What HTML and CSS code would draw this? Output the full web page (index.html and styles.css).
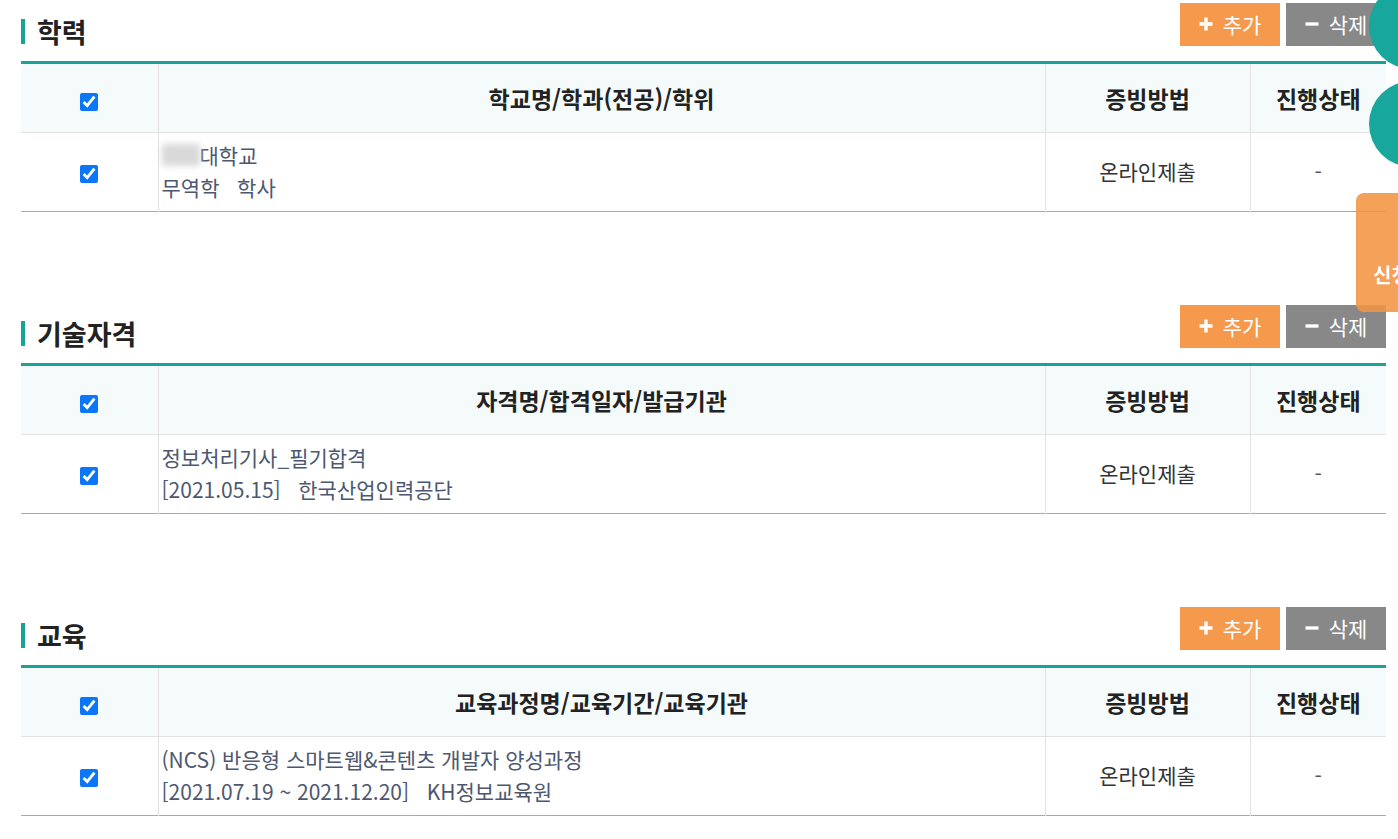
FILE: index.html
```html
<!DOCTYPE html>
<html lang="ko">
<head>
<meta charset="utf-8">
<title>이력 정보</title>
<link rel="stylesheet" href="styles.css">
</head>
<body>
<div class="page">
  <section class="block">
    <div class="block-head">
      <h2 class="block-title">학력</h2>
      <div class="actions">
        <button class="btn btn-add" type="button"><svg class="ico" viewBox="0 0 14 14"><path d="M7 0.5v13M0.5 7h13"/></svg>추가</button>
        <button class="btn btn-del" type="button"><svg class="ico" viewBox="0 0 14 14"><path d="M0.5 7h13"/></svg>삭제</button>
      </div>
    </div>
    <table class="grid">
      <colgroup><col class="c-chk"><col class="c-main"><col class="c-proof"><col class="c-state"></colgroup>
      <thead>
        <tr><th><input type="checkbox" checked></th><th>학교명/학과(전공)/학위</th><th>증빙방법</th><th>진행상태</th></tr>
      </thead>
      <tbody>
        <tr>
          <td class="chk"><input type="checkbox" checked></td>
          <td class="info"><span class="blur" aria-hidden="true"></span>대학교<br>무역학&nbsp;&nbsp;&nbsp;학사</td>
          <td class="center">온라인제출</td>
          <td class="center dash">-</td>
        </tr>
      </tbody>
    </table>
  </section>

  <section class="block">
    <div class="block-head">
      <h2 class="block-title">기술자격</h2>
      <div class="actions">
        <button class="btn btn-add" type="button"><svg class="ico" viewBox="0 0 14 14"><path d="M7 0.5v13M0.5 7h13"/></svg>추가</button>
        <button class="btn btn-del" type="button"><svg class="ico" viewBox="0 0 14 14"><path d="M0.5 7h13"/></svg>삭제</button>
      </div>
    </div>
    <table class="grid">
      <colgroup><col class="c-chk"><col class="c-main"><col class="c-proof"><col class="c-state"></colgroup>
      <thead>
        <tr><th><input type="checkbox" checked></th><th>자격명/합격일자/발급기관</th><th>증빙방법</th><th>진행상태</th></tr>
      </thead>
      <tbody>
        <tr>
          <td class="chk"><input type="checkbox" checked></td>
          <td class="info">정보처리기사_필기합격<br>[2021.05.15]&nbsp;&nbsp;&nbsp;한국산업인력공단</td>
          <td class="center">온라인제출</td>
          <td class="center dash">-</td>
        </tr>
      </tbody>
    </table>
  </section>

  <section class="block">
    <div class="block-head">
      <h2 class="block-title">교육</h2>
      <div class="actions">
        <button class="btn btn-add" type="button"><svg class="ico" viewBox="0 0 14 14"><path d="M7 0.5v13M0.5 7h13"/></svg>추가</button>
        <button class="btn btn-del" type="button"><svg class="ico" viewBox="0 0 14 14"><path d="M0.5 7h13"/></svg>삭제</button>
      </div>
    </div>
    <table class="grid">
      <colgroup><col class="c-chk"><col class="c-main"><col class="c-proof"><col class="c-state"></colgroup>
      <thead>
        <tr><th><input type="checkbox" checked></th><th>교육과정명/교육기간/교육기관</th><th>증빙방법</th><th>진행상태</th></tr>
      </thead>
      <tbody>
        <tr>
          <td class="chk"><input type="checkbox" checked></td>
          <td class="info">(NCS) 반응형 스마트웹&amp;콘텐츠 개발자 양성과정<br>[2021.07.19 ~ 2021.12.20]&nbsp;&nbsp;&nbsp;KH정보교육원</td>
          <td class="center">온라인제출</td>
          <td class="center dash">-</td>
        </tr>
      </tbody>
    </table>
  </section>
</div>

<div class="float-circle circle-top"></div>
<div class="float-circle circle-mid"></div>
<div class="float-tab">신청</div>
</body>
</html>
```

FILE: styles.css
```css
* { box-sizing: border-box; }

html, body {
  margin: 0;
  padding: 0;
  background: #fff;
  overflow: hidden;
}

body {
  font-family: "Noto Sans CJK KR", "Noto Sans", sans-serif;
  color: #333;
}

.page {
  padding: 3px 12px 0 21px;
}

.block {
  margin-bottom: 93px;
}

.block-head {
  display: flex;
  justify-content: space-between;
  align-items: flex-end;
  margin-bottom: 15px;
}

.block-title {
  margin: 0 0 2px 0;
  padding-left: 12px;
  border-left: 4px solid #17a398;
  font-size: 27px;
  font-weight: 700;
  line-height: 25px;
  color: #222;
}

.actions {
  display: flex;
  gap: 6px;
}

.btn {
  width: 100px;
  height: 43px;
  border: 0;
  padding: 0 0 2px 0;
  display: flex;
  align-items: center;
  justify-content: center;
  gap: 10px;
  font-family: inherit;
  font-size: 21px;
  color: #fff;
  cursor: pointer;
}

.btn-add { background: #f5994d; }
.btn-del { background: #888888; }

.ico {
  width: 14px;
  height: 14px;
  stroke: #fff;
  stroke-width: 3.4;
  fill: none;
}

.grid {
  width: 100%;
  border-collapse: collapse;
  table-layout: fixed;
  border-top: 3px solid #17a398;
  border-bottom: 1px solid #aaaaaa;
}

.c-chk { width: 137px; }
.c-proof { width: 205px; }
.c-state { width: 136px; }

.grid th {
  height: 70px;
  background: #f5fbfb;
  font-size: 23px;
  font-weight: 700;
  color: #222;
  border-bottom: 1px solid #e2e2e2;
  border-left: 1px solid #e2e2e2;
  padding: 0;
  text-align: center;
}

.grid td {
  height: 78px;
  padding: 6px 3px 8px;
  border-left: 1px solid #e2e2e2;
  font-size: 21px;
  line-height: 32px;
}

.grid th:first-child,
.grid td:first-child {
  border-left: 0;
}

.grid input[type="checkbox"] {
  width: 18px;
  height: 18px;
  margin: 0;
  vertical-align: middle;
  accent-color: #0b76f7;
}

.chk { text-align: center; }

.info {
  color: #4d5870;
  white-space: nowrap;
}

.center {
  text-align: center;
  color: #333;
}

.dash { color: #555; }

.blur {
  display: inline-block;
  vertical-align: top;
  width: 38px;
  height: 22px;
  margin-top: 5px;
  background: #d9d9d9;
  filter: blur(3px);
}

.float-circle {
  position: fixed;
  width: 86px;
  height: 86px;
  border-radius: 50%;
  background: #18a79c;
  left: 1369px;
}

.circle-top { top: -17px; }
.circle-mid { top: 81px; }

.float-tab {
  position: fixed;
  left: 1356px;
  top: 193px;
  width: 70px;
  height: 119px;
  border-radius: 8px;
  background: rgba(243, 148, 67, 0.88);
  color: #fff;
  font-size: 20px;
  font-weight: 700;
  padding: 67px 0 0 17px;
  white-space: nowrap;
  overflow: hidden;
}
```
